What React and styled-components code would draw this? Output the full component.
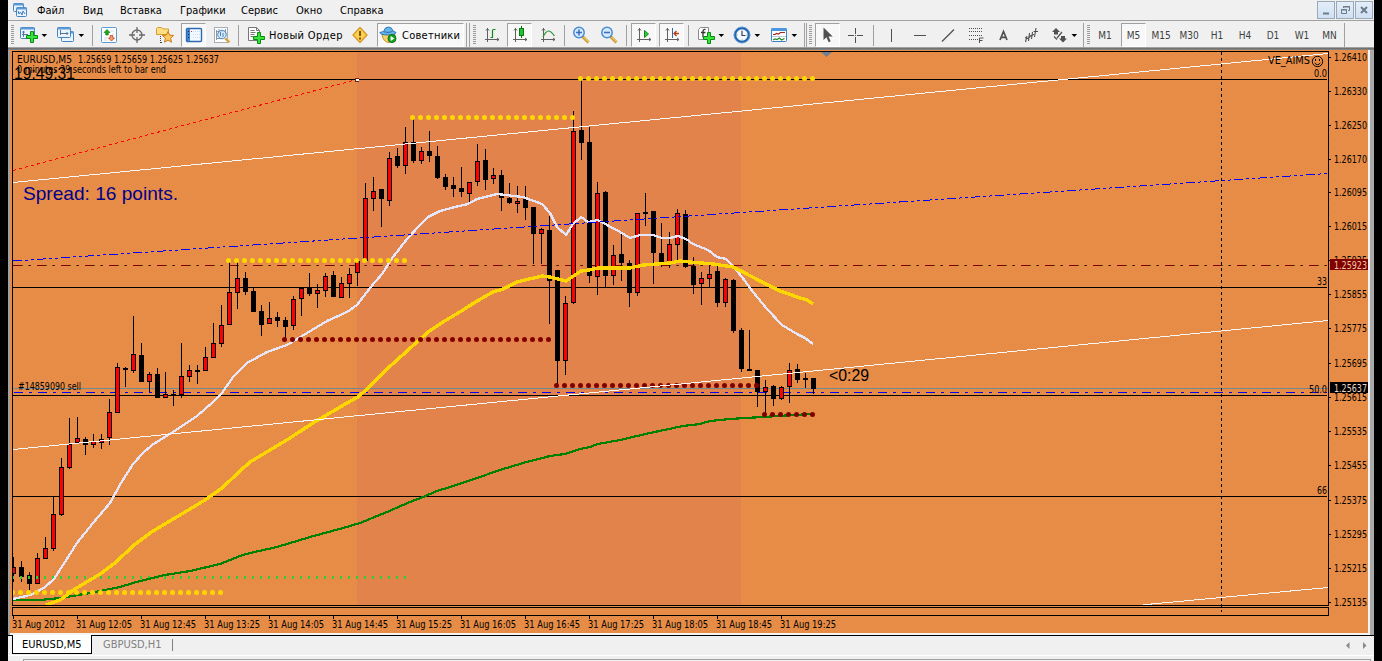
import { Fragment } from "react";
import styled, { createGlobalStyle, css } from "styled-components";

const GlobalStyle = createGlobalStyle`
  * {
    box-sizing: border-box;
  }
  body {
    margin: 0;
    background: #000;
    overflow: hidden;
  }
`;

const UI_FONT = '"DejaVu Sans Condensed", "DejaVu Sans", sans-serif';

const Frame = styled.div`
  display: flex;
  flex-direction: column;
  width: 1382px;
  height: 661px;
  padding: 0 8px;
  background: #000;
  font-family: ${UI_FONT};
  font-size: 11px;
  color: #000;
`;

const MenuBar = styled.nav`
  display: flex;
  align-items: center;
  flex: 0 0 20px;
  padding-left: 4px;
  background: #f0f0f0;
`;

const AppIcon = styled.svg`
  width: 16px;
  height: 16px;
  margin-right: 9px;
`;

const MenuItem = styled.span`
  width: ${({ $w }) => $w}px;
  padding-top: 1px;
  font-size: 11px;
  line-height: 18px;
  white-space: nowrap;
`;

const WindowButtons = styled.div`
  display: flex;
  gap: 1px;
  margin-left: auto;
  padding-right: 1px;
`;

const WindowButton = styled.button`
  display: flex;
  width: 18px;
  height: 18px;
  padding: 0;
  border: 1px solid #9aa9b8;
  background: linear-gradient(#e4eefa, #cfe0f3);
`;

const ToolBar = styled.div`
  display: flex;
  align-items: center;
  flex: 0 0 28px;
  padding-top: 2px;
  border-top: 1px solid #a0a0a0;
  border-bottom: 1px solid #a0a0a0;
  background: #f0f0f0;
`;

const Grip = styled.i`
  flex: 0 0 3px;
  height: 20px;
  margin-left: ${({ $ml }) => $ml}px;
  background: repeating-linear-gradient(#9b9b9b 0 1px, #f0f0f0 1px 2px);
`;

const Separator = styled.i`
  flex: 0 0 1px;
  height: ${({ $tall }) => ($tall ? 24 : 21)}px;
  margin-left: ${({ $ml }) => $ml}px;
  background: #a0a0a0;
`;

const Tool = styled.button`
  display: flex;
  align-items: center;
  justify-content: center;
  flex: 0 0 ${({ $w }) => $w}px;
  min-width: 0;
  height: 24px;
  margin-left: ${({ $ml }) => $ml}px;
  padding: 0;
  border: 0;
  background: none;
  font-family: inherit;
  font-size: 11px;
  color: #000;
  white-space: nowrap;
  ${({ $pressed }) =>
    $pressed &&
    css`
      border: 1px solid;
      border-color: #a0a0a0 #fff #fff #a0a0a0;
      background: #f8f8f8;
    `}
`;

const ToolLabel = styled.span`
  flex: 0 0 ${({ $w }) => $w}px;
  margin-left: ${({ $ml }) => $ml}px;
  text-align: left;
  white-space: nowrap;
  letter-spacing: ${({ $ls }) => $ls}px;
`;

const TimeFrame = styled(Tool)`
  font-size: 10px;
  color: #404040;
`;

const Glyph = styled.svg`
  flex: 0 0 18px;
  width: 18px;
  height: 18px;
`;

const Workspace = styled.main`
  flex: 0 0 586px;
  padding: 2px 4px 2px 2px;
  background: linear-gradient(#696969, #8a8a8a) 0 0 / 100% 2px no-repeat,
    linear-gradient(90deg, #a0a0a0 0 2px, #f4f4f4 2px calc(100% - 4px), #a9a9a9 calc(100% - 4px));
`;

const ChartSvg = styled.svg`
  display: block;
  width: 1358px;
  height: 583px;
  overflow: visible;
  font-family: ${UI_FONT};
  font-size: 10px;
`;

const TabBar = styled.footer`
  display: flex;
  align-items: flex-start;
  flex: 0 0 20px;
  padding-left: 4px;
  border-top: 1px solid #000;
  background: #f0f0f0;
`;

const Tab = styled.div`
  width: ${({ $w }) => $w}px;
  height: 19px;
  margin-top: -1px;
  padding-left: 11px;
  font-size: 11px;
  line-height: 20px;
  color: #808080;
  ${({ $active }) =>
    $active &&
    css`
      padding-left: 9px;
      border: 1px solid #000;
      border-top: 0;
      background: #fff;
      color: #000;
    `}
`;

const TabDivider = styled.i`
  width: 1px;
  height: 12px;
  margin-top: 3px;
  background: #808080;
`;

const TabScroll = styled.svg`
  width: 24px;
  height: 9px;
  margin: 5px 5px 0 auto;
`;

const StatusEdge = styled.div`
  flex: 1;
  padding: 3px 3px 0 15px;
  background: #f0f0f0;
  border-top: 1px solid #fff;
`;

const StatusLine = styled.div`
  height: 3px;
  border: 1px solid #a0a0a0;
  border-bottom: 0;
`;

/* ---------- toolbar icons ---------- */

const Plus = ({ x = 8, y = 7 }) => (
  <path
    d={`M${x + 4} ${y}h3v4h4v3h-4v4h-3v-4h-4v-3h4z`}
    fill="#35e53a"
    stroke="#0a8a14"
  />
);

const Axes = () => (
  <path
    d="M4.5 2v14M2 13.5h14M3 4.5l1.5-2 1.500 2M14 12l2 1.500-2 1.500"
    stroke="#606060"
    fill="none"
  />
);

const MiniWindow = ({ x, y, w = 13, h = 10 }) => (
  <>
    <rect x={x} y={y} width={w} height={h} rx="1" fill="#eaf4fe" stroke="#4584c0" />
    <path d={`M${x} ${y + 1}h${w}`} stroke="#5d9bd6" strokeWidth="2" />
  </>
);

const Magnifier = () => (
  <>
    <path d="M10.500 10.500l6 6" stroke="#c9982e" strokeWidth="3" />
    <path d="M11.500 11l5 5" stroke="#ffe27a" />
    <circle cx="7" cy="6.500" r="5.200" fill="#d5ebfd" stroke="#4c8bd0" strokeWidth="1.500" />
  </>
);

const ICONS = {
  newChart: (
    <>
      <MiniWindow x={0.5} y={1.5} w={14} h={11} />
      <path d="M3.500 5v6M2 8.500h6M2.500 6.500l1-1.500 1 1.500" stroke="#54779d" />
      <Plus x={6.500} y={5.500} />
    </>
  ),
  profiles: (
    <>
      <MiniWindow x={4.5} y={5.5} w={12} h={10} />
      <MiniWindow x={0.5} y={1.5} w={13} h={10} />
      <path d="M3.500 4v5M3 7.500h8M9.500 6l1.500 1.500L9.500 9" stroke="#54779d" fill="none" />
    </>
  ),
  market: (
    <>
      <rect x="1.500" y="1.500" width="15" height="15" rx="1" fill="#fbfdff" stroke="#5b9bd8" />
      <path d="M10 5h4M12 8h2M4 12h4M4 14h3" stroke="#d4dee6" />
      <path d="M7 3.500l3 3H8.300V9H5.700V6.500H4z" fill="#1ba81b" stroke="#087508" strokeWidth=".6" />
      <path d="M11.500 15l3-3h-1.700V9.500h-2.600V12H8.500z" fill="#f5a070" stroke="#c0441a" strokeWidth=".8" />
    </>
  ),
  target: (
    <g fill="none" stroke="#6a6a6a" strokeWidth="1.300">
      <circle cx="9" cy="9" r="5" />
      <path d="M9 1v6M9 11v6M1 9h6M11 9h6" />
    </g>
  ),
  folderStar: (
    <>
      <path d="M.5 8.500v-6l1-1h4L7 3h5.500v5.500z" fill="#ffdf85" stroke="#d89b28" />
      <path d="M4.500 10v7M5 16.500h2" stroke="#444" strokeDasharray="1 1" />
      <path
        d="M12 5.500l1.600 3.600 4 .4-3 2.700.9 4-3.500-2.100-3.500 2.100.9-4-3-2.700 4-.4z"
        fill="#ffc860"
        stroke="#c57d1d"
      />
    </>
  ),
  navigator: (
    <>
      <rect x="1.500" y="2.500" width="15" height="13" rx="1" fill="#f2f8ff" stroke="#2c6cb0" strokeWidth="1.400" />
      <path d="M3.500 3v12" stroke="#3f86d2" strokeWidth="3" />
      <path d="M3.500 5v9" stroke="#0d2a50" strokeDasharray="1 2" />
      <path d="M8 5.500h7M8 8.500h7M8 11.500h7" stroke="#c8dcf0" strokeDasharray="1 1" />
      <path d="M6 5.500h1" stroke="#e33" />
    </>
  ),
  tester: (
    <>
      <rect x="1.500" y="1.500" width="13" height="15" fill="#fff" stroke="#a5adb5" />
      <path d="M3.500 4v10M3.500 5.500h9M6 3v5M12.500 3v6M3.500 12.500h5" stroke="#8898a8" />
      <circle cx="9" cy="8.500" r="4.300" fill="#c7e2fa" fillOpacity=".8" stroke="#4f86bd" />
      <path d="M7.500 6v4M10 7v4" stroke="#5480ab" />
      <path d="M12.300 12.300l4 4" stroke="#d6a43a" strokeWidth="2.400" />
    </>
  ),
  order: (
    <>
      <path d="M1.500 1.500h8l3 3v10h-11z" fill="#fff" stroke="#777" />
      <path d="M9.500 1.500v3h3M3.500 4.500h4M3.500 6.500h5M3.500 8.500h4M3.500 10.500h3" stroke="#777" fill="none" />
      <Plus x={6.5} y={6.5} />
    </>
  ),
  warning: (
    <>
      <path d="M9 1.500l7 7.500-7 7.500L2 9z" fill="#fdd04a" stroke="#d79a30" strokeWidth="1.400" strokeLinejoin="round" />
      <path d="M9 5v5M9 11.500v2" stroke="#6a4a10" strokeWidth="1.800" />
    </>
  ),
  expert: (
    <>
      <path d="M3 8.500q1 7.500 7 8 5-1 6-8z" fill="#f8d068" stroke="#c39028" />
      <path d="M4.500 5.500Q6 .8 9.500 1q3.500 0 4.500 4l3 1.500q-.5 2.500-8 2.500T.8 6.500z" fill="#68b5ec" stroke="#2d78b5" />
      <path d="M5 5.800q4 1.500 8.500-.3" stroke="#2d6fa8" fill="none" />
      <circle cx="13" cy="12.500" r="4" fill="#17a321" stroke="#0b7414" />
      <path d="M11.600 10v5l3.800-2.500z" fill="#fff" />
    </>
  ),
  bars: (
    <>
      <Axes />
      <path d="M9.500 4v8M9.500 3.500h3M7.500 11.500h2" stroke="#128a1a" strokeWidth="1.200" />
    </>
  ),
  candles: (
    <>
      <Axes />
      <path d="M10.500 0v12" stroke="#0b6a10" />
      <rect x="8.500" y="2.500" width="4" height="7" fill="#20c32b" stroke="#0b7a12" />
    </>
  ),
  lineChart: (
    <>
      <Axes />
      <path d="M4 11q3-6 5.500-6t6 5" stroke="#26942c" strokeWidth="1.200" fill="none" />
    </>
  ),
  zoomIn: (
    <>
      <Magnifier />
      <path d="M4 6.500h6M7 3.500v6" stroke="#3d6fc0" strokeWidth="1.600" />
    </>
  ),
  zoomOut: (
    <>
      <Magnifier />
      <path d="M4 6.500h6" stroke="#3d6fc0" strokeWidth="1.600" />
    </>
  ),
  autoScroll: (
    <>
      <Axes />
      <path d="M9.500 4.500v7l4-3.500z" fill="#2fc83a" stroke="#118a1a" />
    </>
  ),
  chartShift: (
    <>
      <Axes />
      <path d="M9.500 2v10" stroke="#2c6ba5" />
      <path d="M16 7.500h-5M13.500 5L11 7.500l2.500 2.500" stroke="#b73d10" strokeWidth="1.300" fill="none" />
    </>
  ),
  indicators: (
    <>
      <path d="M1.500 3.500l2-2h8v12h-10z" fill="#fff" stroke="#8a8a8a" />
      <path d="M8.500 3.500q-2.500-.5-2.500 2v6M4 6.500h4.500" stroke="#333" strokeWidth="1.300" fill="none" />
      <Plus x={6.5} y={6.5} />
    </>
  ),
  clock: (
    <>
      <circle cx="9" cy="9" r="7" fill="#f4f9fe" stroke="#2467b1" strokeWidth="2.600" />
      <circle cx="9" cy="9" r="8" fill="none" stroke="#6da7e0" strokeWidth=".8" />
      <path d="M9 5v4.500h3.500" stroke="#345" strokeWidth="1.200" fill="none" />
      <path d="M9 3.500v1M9 13.500v1M3.500 9h1M13.500 9h1" stroke="#789" />
    </>
  ),
  templates: (
    <>
      <rect x="1.500" y="2.500" width="15" height="13" rx="1" fill="#fff" stroke="#3a82c8" />
      <path d="M1.500 3.500h15" stroke="#4c96dd" strokeWidth="3" />
      <path d="M3 8.500h2l1.500-1 2 .5 2-1.500h4.500" stroke="#a02a20" strokeWidth="1.200" fill="none" />
      <path d="M2 10.500h14" stroke="#bcd" />
      <path d="M3 14l2-1 2 .5 2.500-1.500 2 2 3-1.500" stroke="#208a28" strokeWidth="1.200" fill="none" />
    </>
  ),
  cursor: <path d="M4.500 1.500v12.500l3-2.800 2.200 5 2-1-2.200-4.700h4.200z" fill="#505050" />,
  crosshair: <path d="M9.500 2v6M9.500 11v6M2 9.500h6M11 9.500h6M9 9.500h1" stroke="#505050" />,
  vline: <path d="M9.500 3v13" stroke="#505050" />,
  hline: <path d="M3 9.500h12" stroke="#505050" />,
  trend: <path d="M3 15.500L15 3.500" stroke="#505050" strokeWidth="1.200" />,
  fibo: (
    <>
      <path d="M2 2.500h14M2 5.500h14M2 9.500h14M2 13.500h9" stroke="#505050" strokeDasharray="1 1" />
      <path d="M12.500 17v-5h4M12.500 14.500h3" stroke="#505050" fill="none" />
    </>
  ),
  letter: <path d="M6 14L9.500 5.500 13 14M7.300 11.300h4.400" stroke="#505050" strokeWidth="1.700" fill="none" />,
  cycles: (
    <path
      d="M3.500 16l1.500-6M6.500 15l1-8M9.500 13l1-7M3 11.500l3 1 3-3 3-1M12.500 11l1.500-9M11.500 5.500h4.500"
      stroke="#505050"
      strokeWidth="1.100"
      fill="none"
    />
  ),
  arrows: (
    <>
      <path d="M6 2l4 4H8v2.500H4V6H2zM13 16.500l-4-4h2V10h4v2.500h2z" fill="#505050" />
      <path d="M4 10.500l3 3M12 6l-5 6" stroke="#505050" strokeWidth="1.200" />
    </>
  ),
  drop: <path d="M6.500 8h5.600L9.300 11z" fill="#000" />,
};

const Icon = ({ name }) => (
  <Glyph viewBox="0 0 18 18" fill="none">
    {ICONS[name]}
  </Glyph>
);

// [type, left gap, width, pressed]
const TOOLS_STANDARD = [
  ["grip", 3],
  ["newChart", 5, 20],
  ["drop", 0, 10],
  ["profiles", 7, 20],
  ["drop", 0, 10],
  ["sep", 6],
  ["market", 6, 20],
  ["target", 8, 20],
  ["folderStar", 8, 20],
  ["navigator", 6, 25, true],
  ["tester", 6, 20],
  ["sep", 6],
  ["order", 7, 20],
];

const TOOLS_CHART = [
  ["tall", 2],
  ["tall", 2],
  ["grip", 3],
  ["bars", 6, 20],
  ["candles", 5, 25, true],
  ["lineChart", 6, 20],
  ["sep", 6],
  ["zoomIn", 6, 20],
  ["zoomOut", 8, 20],
  ["sep", 7],
  ["autoScroll", 4, 25, true],
  ["chartShift", 3, 25, true],
  ["sep", 4],
  ["indicators", 7, 20],
  ["drop", 0, 10],
  ["clock", 6, 20],
  ["drop", 0, 10],
  ["templates", 7, 20],
  ["drop", 0, 10],
  ["tall", 5],
  ["tall", 1],
  ["grip", 2],
  ["cursor", 3, 25, true],
  ["crosshair", 5, 20],
  ["sep", 8],
  ["vline", 7, 20],
  ["hline", 9, 20],
  ["trend", 8, 20],
  ["fibo", 8, 20],
  ["letter", 7, 20],
  ["cycles", 8, 20],
  ["arrows", 8, 20],
  ["drop", 0, 10],
  ["tall", 4],
  ["grip", 3],
];

const TIMEFRAMES = [
  ["M1", 1, 28],
  ["M5", 2, 25, true],
  ["M15", 1, 28],
  ["M30", 0, 28],
  ["H1", 0, 28],
  ["H4", 0, 28],
  ["D1", 0, 28],
  ["W1", 1, 28],
  ["MN", 0, 27],
];

const Tools = ({ items }) =>
  items.map(([type, ml, w, pressed], i) => {
    if (type === "grip") return <Grip key={i} $ml={ml} />;
    if (type === "sep" || type === "tall")
      return <Separator key={i} $ml={ml} $tall={type === "tall"} />;
    return (
      <Tool key={i} $ml={ml} $w={w} $pressed={pressed}>
        <Icon name={type} />
      </Tool>
    );
  });

/* ---------- chart data (5 minute bars, 8px apart) ---------- */

// [body top, body bottom, high, low, up]
const CANDLES = [
  [567, 574, 557, 582, 1], [567, 577, 561, 582, 0], [575, 584, 572, 590, 0],
  [558, 584, 553, 584, 1], [548, 559, 537, 559, 1], [514, 549, 497, 551, 1],
  [467, 515, 458, 516, 1], [444, 468, 418, 469, 1], [438, 443, 417, 443, 1],
  [439, 445, 437, 455, 0], [441, 445, 434, 448, 1], [439, 443, 434, 449, 1],
  [412, 438, 399, 445, 1], [367, 413, 363, 413, 1], [368, 370, 367, 387, 0],
  [354, 371, 316, 373, 1], [355, 382, 343, 382, 0], [374, 382, 372, 392, 1],
  [374, 398, 368, 398, 0], [394, 398, 372, 398, 1], [394, 395, 390, 406, 0],
  [376, 395, 343, 398, 1], [370, 377, 365, 382, 1], [370, 372, 365, 384, 0],
  [357, 371, 347, 371, 1], [343, 358, 323, 358, 1], [325, 344, 305, 347, 1],
  [292, 325, 262, 325, 1], [278, 293, 262, 309, 1], [278, 292, 272, 295, 0],
  [291, 312, 288, 312, 0], [311, 325, 305, 336, 0], [318, 324, 302, 324, 1],
  [317, 321, 312, 327, 0], [320, 327, 317, 338, 0], [299, 326, 296, 330, 1],
  [288, 299, 287, 316, 1], [288, 294, 273, 296, 0], [290, 294, 284, 308, 1],
  [276, 291, 273, 297, 1], [275, 297, 271, 297, 0], [283, 298, 277, 298, 1],
  [274, 284, 268, 298, 1], [261, 273, 260, 286, 1], [198, 261, 183, 261, 1],
  [191, 199, 177, 211, 1], [189, 199, 189, 227, 0], [158, 201, 152, 206, 1],
  [156, 166, 148, 168, 0], [142, 166, 127, 174, 1], [142, 161, 119, 163, 0],
  [151, 161, 147, 164, 1], [151, 156, 131, 162, 0], [156, 178, 146, 179, 0],
  [177, 187, 174, 190, 0], [185, 189, 177, 197, 0], [188, 192, 167, 197, 0],
  [182, 194, 182, 203, 1], [161, 182, 144, 186, 1], [160, 180, 149, 190, 0],
  [175, 179, 168, 184, 1], [175, 198, 170, 211, 0], [198, 203, 183, 204, 0],
  [201, 204, 186, 213, 1], [199, 208, 186, 220, 0], [207, 234, 207, 264, 0],
  [229, 234, 228, 264, 1], [230, 281, 216, 324, 0], [270, 361, 270, 385, 0],
  [303, 361, 296, 375, 1], [131, 303, 111, 304, 1], [130, 143, 80, 160, 0],
  [142, 276, 127, 283, 0], [193, 277, 182, 295, 1], [192, 276, 191, 287, 0],
  [255, 276, 245, 285, 1], [254, 263, 233, 281, 0], [263, 293, 260, 307, 0],
  [213, 293, 213, 296, 1], [212, 214, 193, 226, 0], [211, 253, 211, 284, 0],
  [253, 262, 223, 267, 0], [244, 262, 232, 268, 1], [213, 245, 209, 261, 1],
  [214, 267, 210, 268, 0], [266, 285, 257, 294, 0], [278, 284, 272, 305, 1],
  [274, 279, 266, 287, 1], [271, 303, 266, 307, 0], [279, 303, 278, 307, 1],
  [280, 331, 279, 333, 0], [330, 369, 328, 372, 0], [369, 371, 330, 371, 0],
  [370, 392, 370, 407, 0], [387, 392, 380, 414, 1], [386, 399, 385, 406, 0],
  [387, 399, 386, 400, 1], [370, 387, 363, 403, 1], [369, 380, 364, 383, 0],
  [378, 380, 373, 388, 0], [378, 389, 378, 394, 0],
];

const MA_FAST =
  "13,599 26,596 33,594 45,587 54,579 65,562 77,543 93,523 110,503 121,483 133,464 143,453 152,445 160,440 173,432 197,416 213,402 222,393 233,377 247,363 267,352 287,345 307,333 327,321 347,312 357,305 370,288 382,274 393,257 407,239 420,225 428,217 440,211 455,207 468,204 477,199 497,194 523,197 542,204 550,213 557,227 566,235 573,224 581,217 588,222 598,220 607,225 620,232 630,238 640,235 653,235 662,238 670,238 678,236 686,239 693,244 708,250 717,257 726,259 733,266 742,277 753,292 767,309 782,325 797,334 805,338 813,344";

const MA_MID =
  "46,605 60,600 75,589 100,574 115,563 133,546 150,533 180,515 205,500 222,488 240,471 250,462 270,450 290,438 313,423 330,413 347,403 358,397 367,389 387,369 407,351 428,332 443,322 463,310 477,301 493,292 503,289 517,282 542,276 550,277 566,281 581,271 589,270 598,268 607,268 630,268 643,265 670,263 680,261 690,262 713,264 733,267 743,272 760,281 780,291 789,294 797,297 807,300 813,304";

const MA_SLOW =
  "13,600 40,600 60,598 90,593 120,587 140,581 165,575 190,571 220,564 240,556 250,553 277,547 310,537 343,528 360,523 387,512 410,502 423,497 437,491 450,487 477,478 500,470 523,463 550,456 565,454 580,449 590,447 598,444 620,440 650,433 683,426 700,424 710,421 730,419 745,418 763,417 793,415 813,414";

// [first x, last x, y, colour]
const DOT_ROWS = [
  [580.5, 812.5, 78.5, "#ffd700"],
  [412.5, 572.5, 117.5, "#ffd700"],
  [228.5, 404.5, 260.5, "#ffd700"],
  [12.5, 220.5, 592.5, "#ffd700"],
  [284.5, 548.5, 339.5, "#800000"],
  [556.5, 756.5, 385.5, "#800000"],
  [764.5, 812.5, 414.5, "#800000"],
];

const PRICES = [
  ["1.26410", 57], ["1.26330", 91], ["1.26250", 125], ["1.26170", 159],
  ["1.26095", 192], ["1.26015", 226], ["1.25935", 260], ["1.25855", 294],
  ["1.25775", 328], ["1.25695", 363], ["1.25615", 397], ["1.25535", 431],
  ["1.25455", 465], ["1.25375", 500], ["1.25295", 534], ["1.25215", 568],
  ["1.25135", 602],
];

const TIMES = [
  "2012", "12:05", "12:45", "13:25", "14:05", "14:45", "15:25",
  "16:05", "16:45", "17:25", "18:05", "18:45", "19:25",
];

const Label = ({ x, y, w, children, ...rest }) => (
  <text x={x} y={y} textLength={w} lengthAdjust="spacingAndGlyphs" {...rest}>
    {children}
  </text>
);

const dotsBetween = (from, to) => {
  const xs = [];
  for (let x = from; x <= to; x += 8) xs.push(x);
  return xs;
};

const Chart = () => (
  <ChartSvg viewBox="10 50 1358 583">
    <defs>
      <clipPath id="plot">
        <rect x="13" y="52" width="1315" height="553" />
      </clipPath>
      <pattern id="grain" width="8" height="8" patternUnits="userSpaceOnUse">
        <rect width="8" height="8" fill="#e88d48" />
        <path
          d="M1 0h1v1h-1zM5 1h1v1h-1zM3 3h1v1h-1zM7 4h1v1h-1zM0 5h1v1h-1zM4 6h1v1h-1zM2 7h1v1h-1z"
          fill="#df8642"
        />
      </pattern>
    </defs>

    <rect x="10" y="50" width="1358" height="583" fill="url(#grain)" shapeRendering="crispEdges" />
    <rect x="357" y="52" width="384" height="553" fill="#e1834a" />

    <g shapeRendering="crispEdges" fill="none">
      <path d="M13 79.5H1327M13 287.5H1327M13 395.5H1327M13 496.5H1327" stroke="#000" />
      <path d="M13 388.5H1328" stroke="#708a94" />
      <path d="M14 392.5H1327" stroke="#0000ff" strokeDasharray="9 6 3 6" />
      <path d="M13 265.5H1327" stroke="#800000" strokeDasharray="9 6 3 6" />
      <path d="M22 265.5H1327" stroke="#008000" strokeDasharray="1 5 1 17" />
      <path d="M1221.5 52V612" stroke="#000" strokeDasharray="3 3" />
    </g>

    <g clipPath="url(#plot)">
      <g shapeRendering="crispEdges">
        {CANDLES.map(([top, bottom, high, low, up], i) => {
          const x = 13 + i * 8;
          return (
            <Fragment key={i}>
              <rect x={x} y={high} width="1" height={low - high} fill="#000" />
              <rect x={x - 2} y={top} width="5" height={bottom - top} fill="#000" />
              {up === 1 && (
                <rect x={x - 1} y={top + 1} width="3" height={bottom - top - 2} fill="#ff0000" />
              )}
            </Fragment>
          );
        })}
      </g>

      {dotsBetween(12, 405).map((x) => (
        <rect key={x} x={x} y="576" width="2" height="3" fill="#32cd32" />
      ))}

      <g fill="none" shapeRendering="crispEdges">
        <polyline points={MA_SLOW} stroke="#008000" strokeWidth="2.2" />
        <polyline points={MA_FAST} stroke="#e6e6fa" strokeWidth="2.3" />
        <polyline points={MA_MID} stroke="#ffd700" strokeWidth="3.4" />
      </g>

      {DOT_ROWS.map(([from, to, y, fill]) =>
        dotsBetween(from, to).map((x) => (
          <circle key={`${x}-${y}`} cx={x} cy={y} r="2.5" fill={fill} />
        ))
      )}

      <g fill="none" shapeRendering="crispEdges">
        <path d="M13 261L1328 173.5" stroke="#0000ff" strokeDasharray="9 3 3 3 3 3" />
        <path d="M13 170.5L357 79.5" stroke="#ff0000" strokeDasharray="3.1 3.1" />
        <path d="M13 182.5L1328 53.5M13 449.5L1328 320.5M1143 604.8L1328 587.5" stroke="#f8f8f8" />
      </g>
      <path d="M821 52h11l-5.500 5z" fill="#708090" />
    </g>
    <g shapeRendering="crispEdges">
      <rect x="355" y="78" width="4" height="4" fill="#702020" />
      <rect x="356" y="79" width="3" height="2" fill="#fff" />
    </g>

    <g fill="none" stroke="#000" shapeRendering="crispEdges">
      <path d="M12.5 51.5H1328.5V605.5H12.5zM12.5 607.5H1328.5V615.5H12.5z" />
      {PRICES.map(([label, y]) => (
        <path key={label} d={`M1329 ${y + 0.5}h2`} />
      ))}
      {TIMES.map((t, i) => (
        <path key={t} d={`M${13.5 + i * 64} 616v3`} />
      ))}
    </g>

    {PRICES.map(([label, y]) => (
      <Label key={label} x={1334} y={y + 3.5} w={33}>
        {label}
      </Label>
    ))}
    <rect x="1330" y="259" width="38" height="11" fill="#800000" />
    <Label x={1334} y={268.5} w={33} fill="#f0c8a8">1.25923</Label>
    <rect x="1330" y="382" width="38" height="11" fill="#000" />
    <Label x={1334} y={391.5} w={33} fill="#e8d8c8">1.25637</Label>

    {TIMES.map((t, i) => (
      <Label key={t} x={12 + i * 64} y={628} w={i ? 56 : 53}>{`31 Aug ${t}`}</Label>
    ))}

    <Label x={17} y={63} w={55}>EURUSD,M5</Label>
    <Label x={78} y={63} w={141}>1.25659 1.25659 1.25625 1.25637</Label>
    <Label x={17} y={73} w={149}>0 minutes 29 seconds left to bar end</Label>
    <g fontFamily='"Liberation Sans", Arial, sans-serif'>
      <Label x={14} y={79} w={61} fontSize="16">19:49:31</Label>
      <Label x={23} y={200} w={155} fontSize="19" fill="#00008b">Spread: 16 points.</Label>
      <Label x={829} y={381} w={40} fontSize="16">{"<0:29"}</Label>
    </g>
    <Label x={18} y={390} w={63}>#14859090 sell</Label>
    <Label x={1268} y={64} w={42}>VE_AIMS</Label>
    <Label x={1314} y={77} w={13}>0.0</Label>
    <Label x={1317} y={285} w={10}>33</Label>
    <Label x={1309} y={393} w={18}>50.0</Label>
    <Label x={1317} y={494} w={10}>66</Label>
    <g fill="none" stroke="#000">
      <circle cx="1317.5" cy="61.5" r="5.2" />
      <path d="M1314.700 63q2.800 3.400 5.600 0" />
      <path d="M1315.5 59v2M1319.5 59v2" />
    </g>
  </ChartSvg>
);

export default function App() {
  return (
    <>
      <GlobalStyle />
      <Frame>
        <MenuBar>
          <AppIcon viewBox="0 0 16 16" fill="none">
            <MiniWindow x={1.5} y={1.5} w={10} h={8} />
            <MiniWindow x={4.5} y={5.5} w={10} h={9} />
            <path d="M6 9l1 3 1.500-2 1.500 3 1-4 2 3" stroke="#3d7ec2" />
          </AppIcon>
          <MenuItem $w={46}>Файл</MenuItem>
          <MenuItem $w={37}>Вид</MenuItem>
          <MenuItem $w={60}>Вставка</MenuItem>
          <MenuItem $w={61}>Графики</MenuItem>
          <MenuItem $w={55}>Сервис</MenuItem>
          <MenuItem $w={44}>Окно</MenuItem>
          <MenuItem $w={60}>Справка</MenuItem>
          <WindowButtons>
            <WindowButton>
              <svg width="16" height="16"><path d="M5 11.500h6" stroke="#6d7c8b" strokeWidth="2" /></svg>
            </WindowButton>
            <WindowButton>
              <svg width="16" height="16" fill="none" stroke="#6d7c8b">
                <path d="M6.500 6V4.500h6v4H11M6 5h7" />
                <path d="M4.500 7.500h5v4h-5zM4 8h6" />
              </svg>
            </WindowButton>
            <WindowButton>
              <svg width="16" height="16"><path d="M5 5l6 6M11 5l-6 6" stroke="#6d7c8b" strokeWidth="2" /></svg>
            </WindowButton>
          </WindowButtons>
        </MenuBar>

        <ToolBar>
          <Tools items={TOOLS_STANDARD} />
          <ToolLabel $ml={3} $w={75} $ls={0.35}>Новый Ордер</ToolLabel>
          <Tool $ml={6} $w={20}>
            <Icon name="warning" />
          </Tool>
          <Tool $ml={7} $w={87} $pressed>
            <Icon name="expert" />
            <ToolLabel $ml={5} $w={60} $ls={0.25}>Советники</ToolLabel>
          </Tool>
          <Tools items={TOOLS_CHART} />
          {TIMEFRAMES.map(([label, ml, w, pressed]) => (
            <TimeFrame key={label} $ml={ml} $w={w} $pressed={pressed}>
              {label}
            </TimeFrame>
          ))}
          <Separator $ml={1} $tall />
        </ToolBar>

        <Workspace>
          <Chart />
        </Workspace>

        <TabBar>
          <Tab $w={80} $active>EURUSD,M5</Tab>
          <Tab $w={80}>GBPUSD,H1</Tab>
          <TabDivider />
          <TabScroll viewBox="0 0 24 9">
            <path d="M4.500 1v7L1 4.500zM18 1v7l3.500-3.500z" fill="#8a8a8a" />
          </TabScroll>
        </TabBar>
        <StatusEdge>
          <StatusLine />
        </StatusEdge>
      </Frame>
    </>
  );
}
